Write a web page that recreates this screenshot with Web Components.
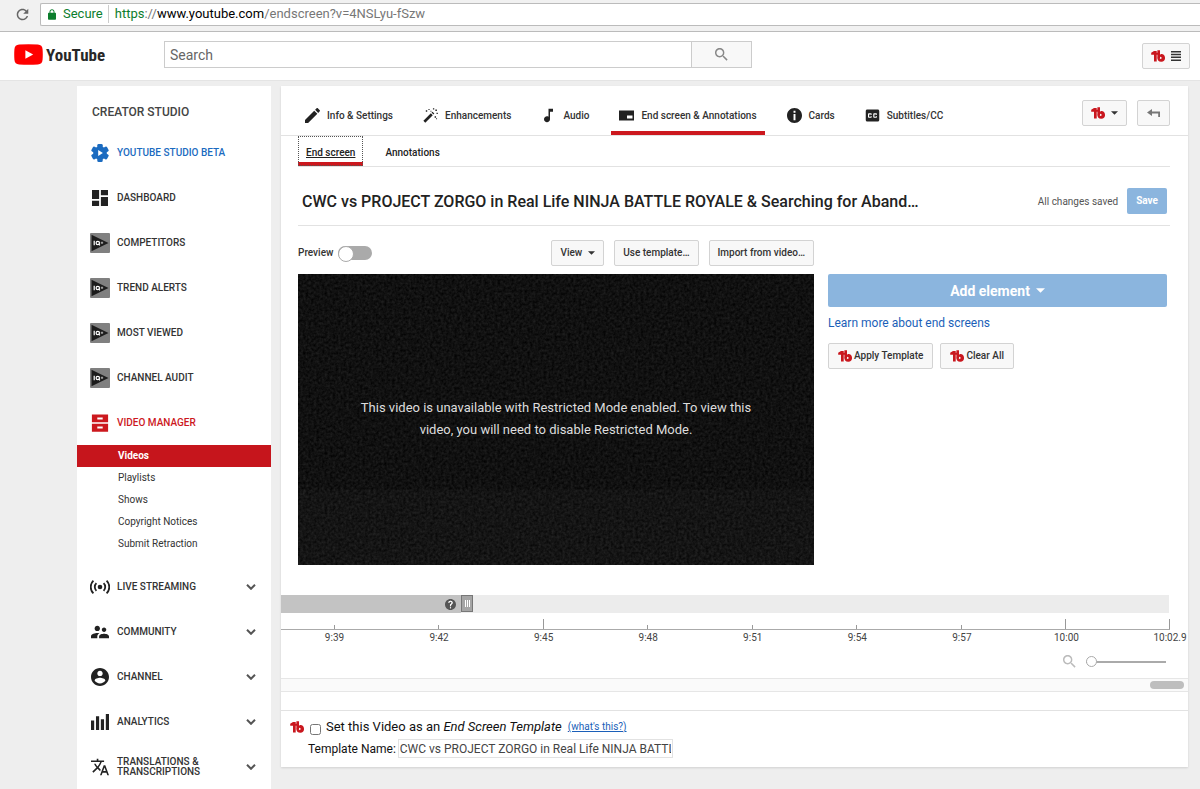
<!DOCTYPE html>
<html lang="en">
<head>
<meta charset="utf-8">
<title>End screen - YouTube</title>
<style>
    html { height: 100%; }
    body {
        margin: 0;
        height: 100%;
        background: #eee;
        color: #333;
        font: 10px/14px Roboto, "Liberation Sans", sans-serif;
    }
</style>
</head>
<body>
<studio-app></studio-app>

<script>
const icons = {
    reload: ['3 3 18 18', '<path d="M17.65 6.35C16.2 4.9 14.21 4 12 4c-4.42 0-7.99 3.58-7.99 8s3.57 8 7.99 8c3.73 0 6.84-2.55 7.73-6h-2.08c-.82 2.33-3.04 4-5.65 4-3.31 0-6-2.69-6-6s2.69-6 6-6c1.66 0 3.14.69 4.22 1.78L13 11h7V4l-2.35 2.35z"/>'],
    lock: ['4 1 16 21', '<path d="M18 8h-1V6c0-2.76-2.24-5-5-5S7 3.24 7 6v2H6c-1.1 0-2 .9-2 2v10c0 1.1.9 2 2 2h12c1.1 0 2-.9 2-2V10c0-1.1-.9-2-2-2zm-2.9 0H8.9V6c0-1.71 1.39-3.1 3.1-3.1s3.1 1.39 3.1 3.1v2z"/>'],
    play: ['0 0 28 20', '<path fill="#f00" d="M5 .4Q14-.4 23 .4Q27.300.7 27.600 5Q28 10 27.600 15Q27.300 19.300 23 19.600Q14 20.400 5 19.600Q.7 19.300.4 15Q0 10 .4 5Q.7.7 5 .4z"/><path fill="#fff" d="M11 5.800v8.400L18.500 10z"/>'],
    search: ['3 3 18 18', '<path d="M15.500 14h-.79l-.28-.27C15.410 12.590 16 11.110 16 9.500 16 5.910 13.090 3 9.500 3S3 5.910 3 9.500 5.910 16 9.500 16c1.610 0 3.090-.59 4.230-1.570l.27.28v.79l5 4.990L20.490 19l-4.990-5zm-6 0C7.010 14 5 11.990 5 9.500S7.010 5 9.500 5 14 7.010 14 9.500 11.990 14 9.500 14z"/>'],
    tb: ['0 0 14 12', '<g fill="#c9171e"><path d="M.2 4.800V2.800L3 1h2.700v10.600H3V4.800zM6.400.2H9v8H6.400zM5.500 2.800h1v2h-1z"/><path fill-rule="evenodd" d="M9.800 4.100a3.800 3.800 0 1 1-3.400 3.900l1.400-1.500zM8.900 6.600v2.600l2.300-1.300z"/></g>'],
    menu: ['0 0 10 10', '<path d="M0 0h10v1.500H0zM0 2.800h10v1.500H0zM0 5.600h10v1.500H0zM0 8.400h10v1.500H0z"/>'],
    gear: ['0 0 20 20', '<circle cx="10" cy="10" r="7.600"/><rect x="7" y="0" width="6" height="20" rx="1.500"/><rect x="7" y="0" width="6" height="20" rx="1.500" transform="rotate(60 10 10)"/><rect x="7" y="0" width="6" height="20" rx="1.500" transform="rotate(120 10 10)"/><path fill="#fff" d="M8 6.800v6.400L13.200 10z"/>'],
    dashboard: ['3 3 18 18', '<path d="M3 13h8V3H3v10zm0 8h8v-6H3v6zm10 0h8V11h-8v10zm0-18v6h8V3h-8z"/>'],
    iq: ['0 0 20 20', '<rect width="20" height="20" rx="1" fill="#808080"/><path fill="#1c1c1c" d="M1.500 1.800v16.400L18.500 10z"/><path fill="none" stroke="#fff" stroke-width="1.200" d="M4.200 7.800v4.400M8.600 10.800l1.300 1.600"/><circle cx="7.800" cy="10" r="1.700" fill="none" stroke="#fff" stroke-width="1.200"/><path stroke="#ccc" stroke-width=".8" d="M10.800 9.800h2.400M12 8.600V11"/>'],
    manager: ['0 0 18 20', '<path fill-rule="evenodd" d="M0 .5h18v8.800H0zm6 3.400v2.200h6V3.900zM0 10.800h18v8.800H0zm6 3.200v2.200h6V14z"/>'],
    live: ['0 0 20 14', '<circle cx="10" cy="7" r="2.300"/><g fill="none" stroke="currentColor" stroke-width="1.800"><path d="M6.400 3.200a5.300 5.300 0 0 0 0 7.600M13.600 3.200a5.300 5.300 0 0 1 0 7.600M3.400.6a9 9 0 0 0 0 12.800M16.600.6a9 9 0 0 1 0 12.800"/></g>'],
    community: ['2 3 20 18', '<path d="M16.500 12c1.380 0 2.490-1.120 2.490-2.500S17.880 7 16.500 7C15.120 7 14 8.120 14 9.500s1.120 2.500 2.500 2.500zM9 11c1.660 0 2.990-1.340 2.990-3S10.660 5 9 5C7.340 5 6 6.340 6 8s1.340 3 3 3zm7.500 3c-1.830 0-5.500.92-5.500 2.750V19h11v-2.250c0-1.830-3.670-2.750-5.500-2.750zM9 13c-2.330 0-7 1.170-7 3.500V19h7v-2.250c0-.85.33-2.340 2.370-3.470C10.500 13.100 9.660 13 9 13z"/>'],
    channel: ['2 2 20 20', '<path d="M12 2C6.480 2 2 6.480 2 12s4.480 10 10 10 10-4.480 10-10S17.520 2 12 2zm0 3c1.660 0 3 1.340 3 3s-1.340 3-3 3-3-1.340-3-3 1.340-3 3-3zm0 14.200c-2.500 0-4.710-1.280-6-3.220.03-1.990 4-3.080 6-3.080 1.990 0 5.970 1.090 6 3.080-1.290 1.940-3.500 3.220-6 3.220z"/>'],
    analytics: ['0 0 17 15', '<path d="M0 6h3v9H0zM4.700 2h3v13h-3zM9.300 5h3v10h-3zM14 0h3v15h-3z"/>'],
    translate: ['1 2 22 20', '<path d="M12.870 15.070l-2.540-2.510.03-.03c1.740-1.940 2.980-4.170 3.710-6.530H17V4h-7V2H8v2H1v1.990h11.170C11.500 7.920 10.440 9.750 9 11.350 8.070 10.320 7.300 9.190 6.690 8h-2c.73 1.630 1.730 3.170 2.980 4.560l-5.090 5.020L4 19l5-5 3.110 3.110.76-2.040zM18.500 10h-2L12 22h2l1.120-3h4.750L21 22h2l-4.500-12zm-2.620 7l1.620-4.330L19.120 17h-3.240z"/>'],
    chevron: ['0 0 10 6', '<path fill="none" stroke="currentColor" stroke-width="2" d="M1 .8l4 4 4-4"/>'],
    caret: ['0 0 8 4', '<path d="M0 0h8L4 4z"/>'],
    pencil: ['3 3 18 18', '<path d="M3 17.250V21h3.750L17.810 9.940l-3.750-3.750L3 17.250zM20.710 7.040c.39-.39.39-1.020 0-1.410l-2.340-2.340c-.39-.39-1.020-.39-1.410 0l-1.830 1.830 3.750 3.750 1.830-1.830z"/>'],
    wand: ['0 0 16 16', '<path d="M.4 13.600l8-8 2 2-8 8zM9.100 4.900l1-1 2 2-1 1z"/><path d="M3 2.500h1.500V4H3zM5.800 1h1.200v1.200H5.800zM10.600.2h1.400v1.400h-1.400zM13.200 1.600h1.600v1.600h-1.600zM14.400 5h1.400v1.400h-1.400zM12.400 8.800h1.500v1.500h-1.500zM8 3h1v1H8zM14 11h1v1h-1z"/>'],
    note: ['3 2 18 20', '<path d="M12 3v10.550c-.59-.34-1.270-.55-2-.55-2.210 0-4 1.790-4 4s1.790 4 4 4 4-1.790 4-4V7h4V3h-6z"/>'],
    endscreen: ['0 0 15 15', '<path fill-rule="evenodd" d="M0 2.500h15v10H0zm8 5v3h5.500v-3z"/>'],
    info: ['2 2 20 20', '<path fill-rule="evenodd" d="M12 2C6.480 2 2 6.480 2 12s4.480 10 10 10 10-4.480 10-10S17.520 2 12 2zm1.300 16.300h-2.600V10h2.600v8.300zm0-10h-2.600V5.600h2.600v2.700z"/>'],
    cc: ['2 2 20 20', '<path d="M19 4H5c-1.110 0-2 .9-2 2v12c0 1.100.89 2 2 2h14c1.100 0 2-.9 2-2V6c0-1.100-.9-2-2-2zm-8 7H9.500v-.5h-2v3h2V13H11v1c0 .55-.45 1-1 1H7c-.55 0-1-.45-1-1v-4c0-.55.45-1 1-1h3c.55 0 1 .45 1 1v1zm7 0h-1.500v-.5h-2v3h2V13H18v1c0 .55-.45 1-1 1h-3c-.55 0-1-.45-1-1v-4c0-.55.45-1 1-1h3c.55 0 1 .45 1 1v1z"/>'],
    back: ['0 0 13 8', '<path d="M0 3.500L5 0v2.600h8V8h-1.800V4.400H5V7z"/>'],
    help: ['2 2 20 20', '<path d="M12 2C6.480 2 2 6.480 2 12s4.480 10 10 10 10-4.480 10-10S17.520 2 12 2zm1 17h-2v-2h2v2zm2.070-7.750l-.9.920C13.450 12.900 13 13.500 13 15h-2v-.5c0-1.100.45-2.100 1.170-2.830l1.240-1.260c.37-.36.59-.86.59-1.410 0-1.100-.9-2-2-2s-2 .9-2 2H8c0-2.210 1.790-4 4-4s4 1.790 4 4c0 .88-.36 1.680-.93 2.250z"/><path d="M8 9q0-4 4-4t4 4q0 2-3 4v2h-2v-3q3-2 3-3.200Q14 7 12 7t-2 2zM11 17h2v2h-2z" fill="#fff"/>'],
};

// base class: clones the class template into an open shadow root
class StudioElement extends HTMLElement {
    constructor() {
        super();
        const template = document.createElement('template');
        template.innerHTML = `<style>* { box-sizing: border-box; }${this.constructor.css}</style>${this.render()}`;
        this.attachShadow({ mode: 'open' }).appendChild(template.content.cloneNode(true));
    }
    render() {
        return '<slot></slot>';
    }
}

class StudioIcon extends StudioElement {
    static get css() {
        return `
            :host { display: inline-flex; flex: none; width: 16px; height: 16px; }
            svg { width: 100%; height: 100%; fill: currentColor; }
        `;
    }
    static get observedAttributes() {
        return ['name'];
    }
    render() {
        return '<svg aria-hidden="true"></svg>';
    }
    attributeChangedCallback(attr, old, value) {
        const svg = this.shadowRoot.querySelector('svg');
        svg.setAttribute('viewBox', icons[value][0]);
        svg.innerHTML = icons[value][1];
    }
}

class StudioButton extends StudioElement {
    static get css() {
        return `
            :host { display: inline-flex; flex: none; }
            button {
                display: flex; align-items: center; justify-content: center; gap: 6px;
                width: 100%; height: 26px; padding: 0 8px;
                border: 1px solid #d3d3d3; border-radius: 2px;
                background: #f8f8f8; color: #333;
                font: 500 10px/14px Roboto, "Liberation Sans", sans-serif;
                white-space: nowrap;
            }
            :host([tight]) button { gap: 2px; padding: 0 9px; }
            :host([primary]) button { padding: 0 9px; border: 0; background: #8bb5de; color: #fff; font-weight: 700; }
            :host([large]) button { height: 33px; font-size: 14px; line-height: 20px; }
        `;
    }
    render() {
        return '<button type="button"><slot></slot></button>';
    }
    connectedCallback() {
        if (this.title) {
            this.shadowRoot.querySelector('button').setAttribute('aria-label', this.title);
        }
    }
}

class BrowserBar extends StudioElement {
    static get css() {
        return `
            :host {
                display: flex; align-items: center; gap: 11px;
                height: 32px; padding: 0 0 3px 16px; box-sizing: border-box;
                border-bottom: 1px solid #bbb; background: #f1f1f1;
            }
            .reload { width: 13px; height: 13px; color: #666; }
            .address {
                display: flex; align-items: center; flex: 1; height: 23px; padding-left: 7px;
                border: 1px solid #bbb; border-right: 0; border-radius: 2px 0 0 2px; background: #fff;
                font-size: 13px; line-height: 18px; color: #777;
            }
            .lock { width: 8px; height: 11px; color: #0b7d2c; }
            .secure, .scheme { color: #0b7d2c; }
            .secure { margin: 0 6px 0 7px; padding-right: 5px; border-right: 1px solid #ccc; }
            .host { color: #000; }
        `;
    }
    render() {
        return `
            <studio-icon class="reload" name="reload"></studio-icon>
            <div class="address">
                <studio-icon class="lock" name="lock"></studio-icon>
                <span class="secure">Secure</span>
                <span class="url"><span class="scheme">https</span>://<span class="host">www.youtube.com</span>/endscreen?v=4NSLyu-fSzw</span>
            </div>
        `;
    }
}

class StudioMasthead extends StudioElement {
    static get css() {
        return `
            :host {
                display: flex; align-items: center; justify-content: space-between;
                height: 49px; padding: 0 10px 0 14px; box-sizing: border-box;
                border-bottom: 1px solid #e4e4e4; background: #fff;
            }
            .start { display: flex; align-items: center; gap: 60px; padding-bottom: 3px; }
            .logo {
                display: flex; align-items: center; gap: 3px; width: 90px; color: #282828;
                font: 700 17px/20px "Roboto Condensed", "Liberation Sans Narrow", Roboto, sans-serif;
                text-decoration: none;
            }
            .logo studio-icon { width: 29px; height: 21px; }
            form { display: flex; width: 588px; }
            input {
                flex: 1; min-width: 0; height: 27px; padding: 0 5px; margin: 0;
                border: 1px solid #ccc; border-radius: 0; color: #555;
                font: 14px/18px Roboto, sans-serif;
            }
            input::placeholder { color: #666; opacity: 1; }
            form button {
                display: flex; align-items: center; justify-content: center;
                width: 61px; height: 27px; margin-left: -1px; padding: 0;
                border: 1px solid #ccc; background: #f8f8f8; color: #888;
            }
            form studio-icon { width: 13px; height: 13px; }
            .tb { width: 14px; height: 12px; }
            .menu { width: 10px; height: 10px; }
        `;
    }
    render() {
        return `
            <div class="start">
                <a class="logo" href="#"><studio-icon name="play"></studio-icon>YouTube</a>
                <form role="search">
                    <input type="text" placeholder="Search" aria-label="Search">
                    <button type="button" aria-label="Search"><studio-icon name="search"></studio-icon></button>
                </form>
            </div>
            <studio-button title="TubeBuddy menu">
                <studio-icon class="tb" name="tb"></studio-icon>
                <studio-icon class="menu" name="menu"></studio-icon>
            </studio-button>
        `;
    }
}

class SideItem extends StudioElement {
    static get css() {
        return `
            :host { display: block; color: #333; }
            a {
                display: flex; align-items: center; height: 45px; padding: 0 15px 0 13px;
                color: inherit; font: 500 10px/10px Roboto, sans-serif; text-decoration: none;
            }
            .icon { display: flex; justify-content: center; width: 20px; margin-right: 7px; color: #222; }
            .label { flex: 1; }
            :host([plain]) .icon { color: inherit; }
            .chevron { width: 10px; height: 6px; color: #555; }
            :host(:not([expandable])) .chevron { display: none; }
            :host([beta]) { color: #1b6bc0; }
            :host([active]) { color: #cc181e; }
        `;
    }
    render() {
        return `
            <a href="#">
                <span class="icon"><slot name="icon"></slot></span>
                <span class="label"><slot></slot></span>
                <studio-icon class="chevron" name="chevron"></studio-icon>
            </a>
        `;
    }
}

class StudioSidebar extends StudioElement {
    static get css() {
        return `
            :host { display: block; width: 194px; flex: none; background: #fff; box-sizing: border-box; }
            h2 { margin: 0; padding: 19px 15px 11px; font: 500 12px/14px Roboto, sans-serif; color: #444; }
            ul { margin: 0 0 9px; padding: 0; list-style: none; }
            li a {
                display: block; height: 22px; padding-left: 41px;
                color: #333; font-size: 10px; line-height: 22px; text-decoration: none;
            }
            li a.current { background: #c6151c; color: #fff; font-weight: 700; }
            .s16 { width: 16px; height: 16px; }
            .s18 { width: 18px; height: 18px; }
            .s20 { width: 20px; height: 20px; }
        `;
    }
    render() {
        const iq = label => `<side-item><studio-icon slot="icon" class="s20" name="iq"></studio-icon>${label}</side-item>`;
        const group = (icon, size, label) =>
            `<side-item expandable><studio-icon slot="icon" class="${size}" name="${icon}"></studio-icon>${label}</side-item>`;
        return `
            <h2>CREATOR STUDIO</h2>
            <nav>
                <side-item beta plain><studio-icon slot="icon" class="s18" name="gear"></studio-icon>YOUTUBE STUDIO BETA</side-item>
                <side-item><studio-icon slot="icon" class="s16" name="dashboard"></studio-icon>DASHBOARD</side-item>
                ${['COMPETITORS', 'TREND ALERTS', 'MOST VIEWED', 'CHANNEL AUDIT'].map(iq).join('')}
                <side-item active plain><studio-icon slot="icon" class="s18" name="manager"></studio-icon>VIDEO MANAGER</side-item>
                <ul>
                    <li><a class="current" href="#">Videos</a></li>
                    <li><a href="#">Playlists</a></li>
                    <li><a href="#">Shows</a></li>
                    <li><a href="#">Copyright Notices</a></li>
                    <li><a href="#">Submit Retraction</a></li>
                </ul>
                ${group('live', 's20', 'LIVE STREAMING')}
                ${group('community', 's18', 'COMMUNITY')}
                ${group('channel', 's18', 'CHANNEL')}
                ${group('analytics', 's18', 'ANALYTICS')}
                ${group('translate', 's18', 'TRANSLATIONS &amp;<br>TRANSCRIPTIONS')}
            </nav>
        `;
    }
}

class EditorTab extends StudioElement {
    static get css() {
        return `
            :host { display: flex; }
            a {
                display: flex; align-items: center; gap: 7px; padding: 14px 8px 0;
                border-bottom: 4px solid transparent;
                color: #333; font: 500 10px/14px Roboto, sans-serif; text-decoration: none; white-space: nowrap;
            }
            :host([selected]) a { border-color: #cc181e; }
            ::slotted(studio-icon) { width: 15px; height: 15px; color: #222; }
        `;
    }
    render() {
        return '<a href="#"><slot name="icon"></slot><slot></slot></a>';
    }
}

class EditorHeader extends StudioElement {
    static get css() {
        return `
            :host { display: block; }
            .tabs {
                display: flex; gap: 14px; height: 50px; padding: 0 18px 0 16px;
                border-bottom: 1px solid #e2e2e2;
            }
            .tools { display: flex; align-items: center; gap: 10px; margin-left: auto; padding-top: 5px; }
            .tb { width: 14px; height: 12px; }
            .caret { width: 7px; height: 4px; }
            .back { width: 13px; height: 8px; margin: 0 1px; color: #777; }
            .subtabs {
                display: flex; height: 31px; margin: 0 18px 0 17px;
                border-bottom: 1px solid #e2e2e2;
            }
            .subtabs a {
                display: flex; align-items: center; padding: 8px 8px 0; margin-right: 14px;
                border-bottom: 4px solid transparent;
                color: #222; font-weight: 500; text-decoration: none;
            }
            .subtabs .current {
                border-color: #cc181e; outline: 1px dotted #555; outline-offset: -1px;
                text-decoration: underline;
            }
        `;
    }
    render() {
        const tab = (icon, label, attr = '') =>
            `<editor-tab ${attr}><studio-icon slot="icon" name="${icon}"></studio-icon>${label}</editor-tab>`;
        return `
            <div class="tabs">
                ${tab('pencil', 'Info &amp; Settings')}
                ${tab('wand', 'Enhancements')}
                ${tab('note', 'Audio')}
                ${tab('endscreen', 'End screen &amp; Annotations', 'selected')}
                ${tab('info', 'Cards')}
                ${tab('cc', 'Subtitles/CC')}
                <div class="tools">
                    <studio-button title="TubeBuddy">
                        <studio-icon class="tb" name="tb"></studio-icon><studio-icon class="caret" name="caret"></studio-icon>
                    </studio-button>
                    <studio-button title="Back"><studio-icon class="back" name="back"></studio-icon></studio-button>
                </div>
            </div>
            <div class="subtabs">
                <a class="current" href="#">End screen</a>
                <a href="#">Annotations</a>
            </div>
        `;
    }
}

class VideoPreview extends StudioElement {
    static get css() {
        return `
            :host { display: grid; height: 291px; background: #111; }
            svg, p { grid-area: 1 / 1; }
            svg { width: 100%; height: 100%; }
            p {
                align-self: center; justify-self: center; width: 400px; margin: 0; padding-bottom: 2px;
                color: #ddd; font-size: 13px; line-height: 22px; text-align: center;
            }
        `;
    }
    render() {
        return `
            <svg aria-hidden="true">
                <filter id="noise" x="0" y="0" width="100%" height="100%" color-interpolation-filters="sRGB">
                    <feTurbulence type="fractalNoise" baseFrequency=".37" numOctaves="2" seed="4"/>
                    <feColorMatrix values=".15 0 0 0 -.01  .15 0 0 0 -.01  .15 0 0 0 -.01  0 0 0 0 1"/>
                </filter>
                <rect width="100%" height="100%" filter="url(#noise)"/>
                <rect y="74%" width="100%" height="26%" fill="#fff" opacity=".02"/>
            </svg>
            <p><slot></slot></p>
        `;
    }
}

class EndscreenEditor extends StudioElement {
    static get css() {
        return `
            :host { display: block; padding: 0 18px 30px 17px; }
            header {
                display: flex; align-items: center; height: 59px; padding: 10px 3px 0 4px;
                border-bottom: 1px solid #e2e2e2;
            }
            h1 {
                flex: 1; min-width: 0; margin: 0; padding-top: 2px; overflow: hidden;
                font: 500 16px/22px Roboto, sans-serif; color: #222; white-space: nowrap;
            }
            .status { margin-right: 9px; padding-top: 2px; color: #555; }
            .content { display: grid; grid-template-columns: 516fr 339fr; column-gap: 14px; padding: 14px 3px 0 0; }
            .bar { display: flex; align-items: center; gap: 10px; height: 34px; padding-bottom: 8px; }
            .toggle { display: flex; align-items: center; gap: 5px; margin-right: auto; font-weight: 500; }
            .toggle input {
                appearance: none; display: flex; width: 34px; height: 14px; margin: 0;
                border-radius: 7px; background: #aaa;
            }
            .toggle input::before {
                content: ""; width: 14px; height: 14px; border: 1px solid #aaa; border-radius: 50%; background: #fff;
            }
            .side { padding-top: 34px; }
            .add { display: flex; }
            .add studio-icon { width: 9px; height: 5px; }
            .learn { display: block; margin: 8px 0 12px; color: #1b5fb8; font-size: 12px; line-height: 16px; text-decoration: none; }
            .actions { display: flex; gap: 7px; }
            .caret { width: 7px; height: 4px; }
            .tb { width: 14px; height: 12px; }
        `;
    }
    render() {
        return `
            <header>
                <h1>CWC vs PROJECT ZORGO in Real Life NINJA BATTLE ROYALE &amp; Searching for Aband…</h1>
                <span class="status">All changes saved</span>
                <studio-button primary>Save</studio-button>
            </header>
            <div class="content">
                <div class="left">
                    <div class="bar">
                        <label class="toggle">Preview <input type="checkbox"></label>
                        <studio-button>View <studio-icon class="caret" name="caret"></studio-icon></studio-button>
                        <studio-button>Use template…</studio-button>
                        <studio-button>Import from video…</studio-button>
                    </div>
                    <video-preview>This video is unavailable with Restricted Mode enabled. To view this video, you will need to disable Restricted Mode.</video-preview>
                </div>
                <div class="side">
                    <studio-button class="add" primary large>Add element <studio-icon name="caret"></studio-icon></studio-button>
                    <a class="learn" href="#">Learn more about end screens</a>
                    <div class="actions">
                        <studio-button tight><studio-icon class="tb" name="tb"></studio-icon> Apply Template</studio-button>
                        <studio-button tight><studio-icon class="tb" name="tb"></studio-icon> Clear All</studio-button>
                    </div>
                </div>
            </div>
        `;
    }
}

class VideoTimeline extends StudioElement {
    static get css() {
        return `
            :host { display: block; }
            .body { padding-right: 18px; }
            .track { display: flex; height: 18px; margin-right: 1px; background: #ececec; }
            .played {
                display: flex; align-items: center; justify-content: flex-end;
                width: 180px; padding-right: 5px; background: #c3c3c3;
            }
            .played studio-icon { width: 11px; height: 11px; color: #555; }
            .handle {
                display: flex; align-items: center; justify-content: center; gap: 1px;
                width: 12px; height: 17px; border: 1px solid #777; background: #a5a5a5;
            }
            .handle i { width: 1px; height: 7px; background: #fff; }
            .ruler { display: grid; grid-template-columns: 107fr repeat(7, 209fr) 207fr; padding-top: 6px; }
            .mark { display: flex; flex-direction: column; align-items: flex-end; }
            .tick { display: flex; align-items: flex-end; justify-content: flex-end; width: 100%; height: 11px; border-bottom: 1px solid #aaa; }
            .tick::after { content: ""; width: 1px; height: 4px; background: #999; }
            .major .tick::after { height: 10px; }
            time { width: 60px; margin-right: -30px; padding-top: 1px; line-height: 14px; text-align: center; color: #444; }
            .zoom { display: flex; align-items: center; justify-content: flex-end; gap: 10px; height: 33px; padding-right: 4px; color: #bbb; }
            .zoom studio-icon { width: 13px; height: 13px; }
            .zoom input { appearance: none; width: 80px; height: 12px; margin: 0; background: linear-gradient(#aaa, #aaa) center / 100% 2px no-repeat; }
            .zoom input::-webkit-slider-thumb {
                appearance: none; width: 11px; height: 11px;
                border: 1px solid #aaa; border-radius: 50%; background: #fff;
            }
            .scroll {
                display: flex; align-items: center; justify-content: flex-end;
                height: 14px; padding-right: 4px;
                border: solid #e6e6e6; border-width: 1px 0; background: #fafafa;
            }
            .thumb { width: 34px; height: 8px; border-radius: 4px; background: #bebebe; }
        `;
    }
    render() {
        const marks = ['9:39', '9:42', '9:45', '9:48', '9:51', '9:54', '9:57', '10:00', '10:02.9'];
        const major = ['9:45', '10:00', '10:02.9'];
        return `
            <div class="body">
                <div class="track">
                    <div class="played"><studio-icon name="help"></studio-icon></div>
                    <div class="handle"><i></i><i></i><i></i></div>
                </div>
                <div class="ruler">
                    ${marks.map(t => `<div class="mark ${major.includes(t) ? 'major' : ''}"><span class="tick"></span><time>${t}</time></div>`).join('')}
                </div>
                <div class="zoom">
                    <studio-icon name="search"></studio-icon>
                    <input type="range" min="0" max="100" value="0" aria-label="Timeline zoom">
                </div>
            </div>
            <div class="scroll"><div class="thumb"></div></div>
        `;
    }
}

class TemplateForm extends StudioElement {
    static get css() {
        return `
            :host { display: block; margin-top: 18px; padding: 7px 9px 9px; border-top: 1px solid #e2e2e2; color: #111; }
            .row { display: flex; align-items: center; height: 18px; font-size: 13px; line-height: 18px; }
            .row studio-icon { width: 14px; height: 12px; margin-right: 6px; }
            .row input { width: 11px; height: 11px; margin: 4px 5px 0 0; }
            .row a { margin-left: 6px; color: #1b5fb8; font-size: 10px; }
            .name { display: flex; align-items: center; gap: 2px; margin: 3px 0 0 18px; font-size: 12px; line-height: 16px; }
            .name input {
                width: 275px; height: 19px; padding: 0 1px; border: 1px solid #e2e2e2;
                color: #444; font: 12px/16px Roboto, sans-serif;
            }
        `;
    }
    render() {
        return `
            <div class="row">
                <studio-icon name="tb"></studio-icon>
                <input type="checkbox" id="template">
                <label for="template">Set this Video as an <em>End Screen Template</em></label>
                <a href="#">(what's this?)</a>
            </div>
            <div class="name">
                <label for="name">Template Name:</label>
                <input type="text" id="name" value="CWC vs PROJECT ZORGO in Real Life NINJA BATTLE ROYALE &amp; Searching">
            </div>
        `;
    }
}

class StudioApp extends StudioElement {
    static get css() {
        return `
            :host { display: flex; flex-direction: column; height: 100%; overflow: hidden; }
            main { display: flex; align-items: flex-start; gap: 10px; flex: 1; min-height: 0; padding: 5px 12px 0 77px; }
            studio-sidebar { align-self: stretch; overflow: hidden; }
            .panel { flex: 1; min-width: 0; background: #fff; box-shadow: 0 1px 2px rgba(0, 0, 0, .12); }
        `;
    }
    render() {
        return `
            <browser-bar></browser-bar>
            <studio-masthead></studio-masthead>
            <main>
                <studio-sidebar></studio-sidebar>
                <div class="panel">
                    <editor-header></editor-header>
                    <endscreen-editor></endscreen-editor>
                    <video-timeline></video-timeline>
                    <template-form></template-form>
                </div>
            </main>
        `;
    }
}

window.customElements.define('studio-icon', StudioIcon);
window.customElements.define('studio-button', StudioButton);
window.customElements.define('browser-bar', BrowserBar);
window.customElements.define('studio-masthead', StudioMasthead);
window.customElements.define('side-item', SideItem);
window.customElements.define('studio-sidebar', StudioSidebar);
window.customElements.define('editor-tab', EditorTab);
window.customElements.define('editor-header', EditorHeader);
window.customElements.define('video-preview', VideoPreview);
window.customElements.define('endscreen-editor', EndscreenEditor);
window.customElements.define('video-timeline', VideoTimeline);
window.customElements.define('template-form', TemplateForm);
window.customElements.define('studio-app', StudioApp);
</script>
</body>
</html>
